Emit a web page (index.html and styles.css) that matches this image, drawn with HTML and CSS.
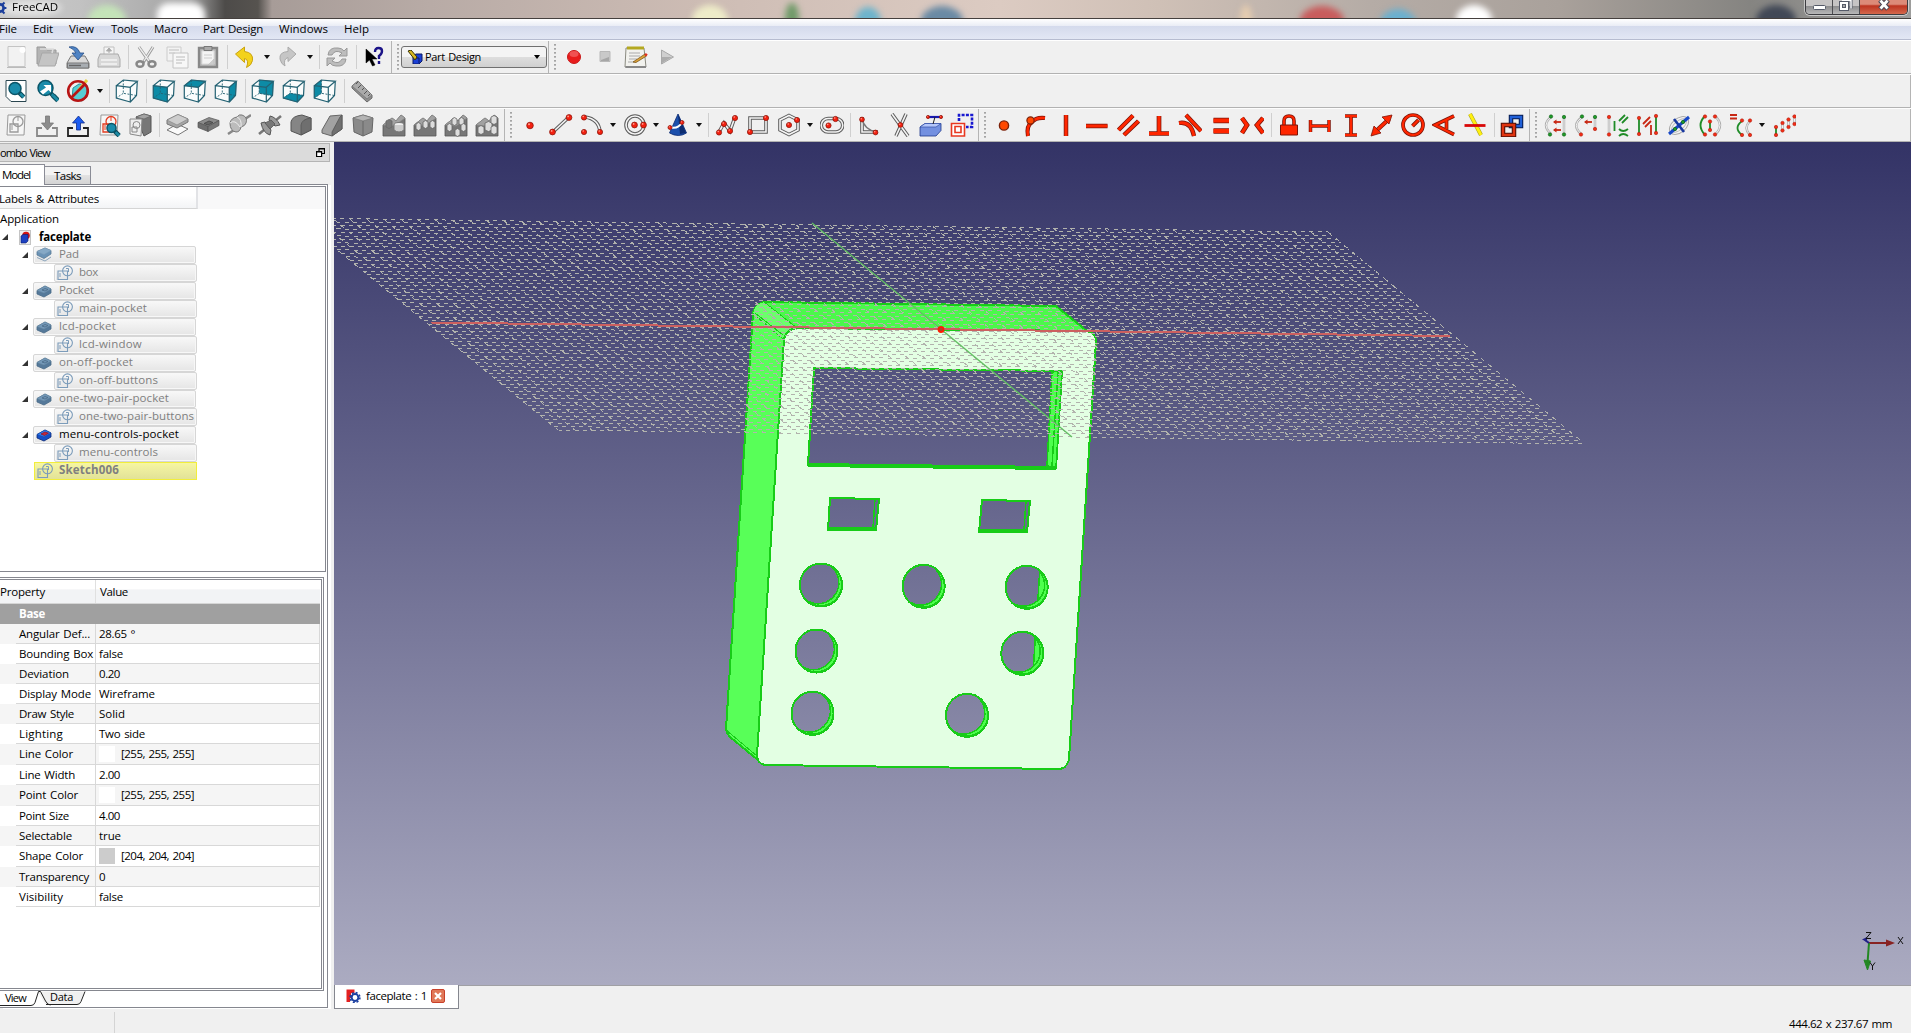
FILE: index.html
```
<!DOCTYPE html>
<html lang="en">
<head>
<meta charset="utf-8">
<title>FreeCAD</title>
<link rel="stylesheet" href="styles.css">
</head>
<body>
<header class="titlebar">
  <div class="glass"><b class="g1"></b><b class="g2"></b><b class="g3"></b><b class="g4"></b><b class="g5"></b><b class="g6"></b><b class="g7"></b><b class="g8"></b><b class="g9"></b><b class="g10"></b><b class="g11"></b><b class="g12"></b></div>
  <svg class="appicon" width="7" height="14" viewBox="0 0 7 14"><circle cx="0" cy="7" r="3.6" fill="none" stroke="#1c3f9c" stroke-width="2.6"/><path d="M4 7h2.4M2.5 3.5l2-2M2.5 10.5l2 2" stroke="#1c3f9c" stroke-width="2"/></svg>
  <span class="apptitle" data-w="46">FreeCAD</span>
  <div class="winbtns">
    <span class="wb"><svg width="27" height="16"><rect x="7.5" y="5.5" width="12" height="4" rx="1" fill="#fff" stroke="#555a68"/></svg></span>
    <span class="wb"><svg width="26" height="16"><path d="M9 .5h9v8" fill="none" stroke="#555a68" stroke-width="3"/><path d="M9 .5h9v8" fill="none" stroke="#fff" stroke-width="1.4"/><rect x="6.5" y="1.500" width="9" height="9" fill="#fff" stroke="#555a68"/><rect x="9.500" y="4.500" width="3" height="3" fill="#aaa" stroke="#555a68"/></svg></span>
    <span class="wb close"><svg width="47" height="16"><path d="M20 0l8 9M28 0l-8 9" stroke="#4d4a58" stroke-width="5"/><path d="M20.500 .5l7 8M27.500 .5l-7 8" stroke="#fff" stroke-width="2.800"/></svg></span>
  </div>
</header>
<nav class="menubar">
  <span class="m1" data-w="18">File</span><span class="m2" data-w="20">Edit</span><span class="m3" data-w="25">View</span><span class="m4" data-w="27">Tools</span><span class="m5" data-w="34">Macro</span><span class="m6" data-w="60">Part Design</span><span class="m7" data-w="49">Windows</span><span class="m8" data-w="25">Help</span>
</nav>
<div class="toolrow r1">
  <div class="group first" data-tools="new open save print | cut copy paste | undo v redo v | refresh | what"></div>
  <div class="group wbgroup"><i class="handle"></i>
    <div class="combo"><svg width="16" height="14" viewBox="0 0 16 14"><path d="M6 6l3-2h6v7l-3 3H6z" fill="#1a3fd6" stroke="#0a1a66"/><path d="M9 8h3v5" fill="none" stroke="#0a1a66"/><path d="M1 1l3-1 6 7-2 3z" fill="#d8b820" stroke="#3a3408"/></svg><span data-w="56">Part Design</span><em></em></div>
  </div>
  <div class="group last" data-handle="1" data-tools="rec stop edit play"></div>
</div>
<div class="toolrow r2"><div class="group last first" data-tools="fit fitsel draw v | iso | cfront ctop cright | cback cbottom cleft | ruler"></div></div>
<div class="toolrow r3">
  <div class="group w504 first" data-tools="sknew leave enter skview map | pad pocket revol groove fillet chamfer draft mirror linear polar multi"></div>
  <div class="group w475" data-handle="1" data-tools="point line arc v circle v cone v | poly rect hex v slot | corner trim extern carbon"></div>
  <div class="group w551" data-handle="1" data-tools="kpoint kobj kvert khor kpar kperp ktan keq ksym | klock khd kvd kdist krad kang ksnell | kref"></div>
  <div class="group last" data-handle="1" data-tools="s1 s2 s3 s4 s5 s6 s7 v s8"></div>
</div>
<main class="work">
  <aside class="dock">
    <div class="docktitle"><span data-w="50">ombo View</span><svg width="9" height="9" viewBox="0 0 9 9"><path d="M3 .5h5.500v5H3zM3 1h5.500" fill="none" stroke="#000" stroke-width="1.200"/><path d="M.6 3.500h5v5h-5z" fill="#fff" stroke="#000" stroke-width="1.200"/><path d="M.5 4h5" stroke="#000"/></svg></div>
    <div class="tabs"><span class="tab on"><span data-w="28">Model</span></span><span class="tab"><span data-w="27">Tasks</span></span></div>
    <div class="pane">
      <section class="tree">
        <div class="treehead"><span data-w="100">Labels &amp; Attributes</span></div>
        <div class="app"><span data-w="59">Application</span></div>
        <div class="row root"><i class="tw"></i><svg width="12" height="15" viewBox="0 0 12 15"><rect x=".5" y=".5" width="11" height="14" fill="#eee" stroke="#c4c4c4"/><circle cx="7" cy="5.500" r="3.800" fill="#d41414"/><path d="M2 6l2-1.500h5V11l-2 2H2z" fill="#1c3fc0" stroke="#0c1f70" stroke-width=".6"/></svg><b data-w="52">faceplate</b></div>
        <div class="row par"><i class="tw"></i><div class="item" data-icon="tpad"><span data-w="20">Pad</span></div></div>
        <div class="row kid"><div class="item" data-icon="tsk"><span data-w="19">box</span></div></div>
        <div class="row par"><i class="tw"></i><div class="item" data-icon="tpk"><span data-w="35">Pocket</span></div></div>
        <div class="row kid"><div class="item" data-icon="tsk"><span data-w="68">main-pocket</span></div></div>
        <div class="row par"><i class="tw"></i><div class="item" data-icon="tpk"><span data-w="57">lcd-pocket</span></div></div>
        <div class="row kid"><div class="item" data-icon="tsk"><span data-w="63">lcd-window</span></div></div>
        <div class="row par"><i class="tw"></i><div class="item" data-icon="tpk"><span data-w="74">on-off-pocket</span></div></div>
        <div class="row kid"><div class="item" data-icon="tsk"><span data-w="79">on-off-buttons</span></div></div>
        <div class="row par"><i class="tw"></i><div class="item" data-icon="tpk"><span data-w="110">one-two-pair-pocket</span></div></div>
        <div class="row kid"><div class="item" data-icon="tsk"><span data-w="115">one-two-pair-buttons</span></div></div>
        <div class="row par"><i class="tw"></i><div class="item live" data-icon="tpkon"><span data-w="120">menu-controls-pocket</span></div></div>
        <div class="row kid"><div class="item" data-icon="tsk"><span data-w="79">menu-controls</span></div></div>
        <div class="row par nochild"><div class="item sel" data-icon="tsk"><b data-w="60">Sketch006</b></div></div>
      </section>
      <section class="props">
        <div class="pinner">
          <div class="phead"><span class="c1"><span data-w="45">Property</span></span><span class="c2"><span data-w="28">Value</span></span></div>
          <div class="pbase"><b data-w="26">Base</b></div>
          <div class="prow"><span class="n"><span data-w="71">Angular Def...</span></span><span class="v"><span data-w="36">28.65 °</span></span></div>
          <div class="prow"><span class="n"><span data-w="74">Bounding Box</span></span><span class="v"><span data-w="24">false</span></span></div>
          <div class="prow"><span class="n"><span data-w="50">Deviation</span></span><span class="v"><span data-w="21">0.20</span></span></div>
          <div class="prow"><span class="n"><span data-w="72">Display Mode</span></span><span class="v"><span data-w="56">Wireframe</span></span></div>
          <div class="prow"><span class="n"><span data-w="55">Draw Style</span></span><span class="v"><span data-w="26">Solid</span></span></div>
          <div class="prow"><span class="n"><span data-w="44">Lighting</span></span><span class="v"><span data-w="46">Two side</span></span></div>
          <div class="prow tall"><span class="n"><span data-w="54">Line Color</span></span><span class="v"><i class="sw"></i><span data-w="73">[255, 255, 255]</span></span></div>
          <div class="prow"><span class="n"><span data-w="56">Line Width</span></span><span class="v"><span data-w="21">2.00</span></span></div>
          <div class="prow tall"><span class="n"><span data-w="59">Point Color</span></span><span class="v"><i class="sw"></i><span data-w="73">[255, 255, 255]</span></span></div>
          <div class="prow"><span class="n"><span data-w="50">Point Size</span></span><span class="v"><span data-w="21">4.00</span></span></div>
          <div class="prow"><span class="n"><span data-w="53">Selectable</span></span><span class="v"><span data-w="22">true</span></span></div>
          <div class="prow tall"><span class="n"><span data-w="64">Shape Color</span></span><span class="v"><i class="sw grey"></i><span data-w="73">[204, 204, 204]</span></span></div>
          <div class="prow"><span class="n"><span data-w="70">Transparency</span></span><span class="v"><span data-w="6">0</span></span></div>
          <div class="prow"><span class="n"><span data-w="44">Visibility</span></span><span class="v"><span data-w="24">false</span></span></div>
        </div>
      </section>
      <div class="btabs">
        <svg width="90" height="16" viewBox="0 0 90 16"><path d="M38 .5l5 9q2 4.500 5 4.500h28q3 0 4-3l4.500-10.500z" fill="#f0f0f0"/><path d="M0 14.500h31q3 0 4-3L38.500.5h2l5 9.500q2 4 5 4M46 13.500h31q3 0 4-3l4-10" fill="none" stroke="#222"/></svg>
        <span class="bt1" data-w="21">View</span><span class="bt2" data-w="23">Data</span>
      </div>
    </div>
  </aside>
  <section class="mdi">
    <div class="view"><svg id="scene" width="1577" height="843" viewBox="334 142 1577 843">
      <g fill="#58ff58" stroke="#18cc18" stroke-width="2" shape-rendering="crispEdges">
        <path fill="#4bf84b" d="M764 302L1056 306L1087 331L797 328L784 339L753 313Q755 304 764 302z"/>
        <path d="M753 313L726 729Q727 734 730 737L758 760L757 757L784 339z"/>
        <path stroke="none" fill="#6bff6b" d="M753 313Q755 304 764 302L797 328Q786 330 784 339z"/>
        <path fill="none" stroke-width="1" d="M764 302L797 328M755 313L783 335M726 730L757 756M1056 306L1087 331"/>
        <path fill="#e3ffe3" fill-rule="evenodd" id="front"/>
      </g>
      <g id="holes" fill="#4dff4d" stroke="#18cc18" stroke-width="1.500" shape-rendering="crispEdges">
        <path d="M1052 372L1062 371L1056 467L1047 466z"/><path d="M1058 372L1052 466" fill="none"/>
        <path d="M808 465L1056 468" stroke-width="4"/>
        <path d="M830 498L879 499L876 530L828 530M875 499L873 528" fill="none"/><path d="M828 528.500L876 529.500" stroke-width="4"/>
        <path d="M982 500L1030 501L1027 532M1026 501L1024 530" fill="none"/><path d="M979 530.500L1027 531.500" stroke-width="4"/>
      </g>
      <g id="grid" stroke="#b2b3ad" stroke-width="1" fill="none" shape-rendering="crispEdges"></g>
      <path d="M431 322.500L1450 336" stroke="#cc6060" stroke-width="2" shape-rendering="crispEdges"/>
      <path d="M812 223L1072 437" stroke="#62c062" stroke-width="1.300"/>
      <circle cx="941" cy="329.500" r="2.600" fill="#b04030" stroke="#ff1c00" stroke-width="1.600"/>
      <g stroke-width="2" fill="none"><path d="M1869 943h18" stroke="#882222"/><path d="M1886 939.500l9 3.500-9 3.500z" fill="#882222"/><path d="M1869 943l-1.500 20" stroke="#228822"/><path d="M1864 960l6.500 1-3 9z" fill="#228822" stroke="#228822" stroke-width="1"/><path d="M1862 939.500l5-2.500v5z" fill="#222288"/><path d="M1865 940l4 3" stroke="#222288"/><g stroke="#111" stroke-width="1"><path d="M1866 932.500h5l-5 6h5M1898 937l5 7M1903 937l-5 7M1870 962.500l2.500 3.500 2.500-3.500M1872.500 966v4"/></g></g>
    </svg></div>
    <div class="docbar"><div class="doctab"><svg width="15" height="14" viewBox="0 0 15 14"><path d="M.5.5h8V4H5v2h2v3H4v4H.5z" fill="#e32020"/><circle cx="9" cy="8.500" r="3.400" fill="#fff" stroke="#1c3fa0" stroke-width="2"/><circle cx="9" cy="8.500" r="4.900" fill="none" stroke="#1c3fa0" stroke-width="1.600" stroke-dasharray="2 1.850"/></svg><span data-w="61">faceplate : 1</span><i class="x"><svg width="14" height="14"><path d="M4 4l6 6M10 4l-6 6" stroke="#fff" stroke-width="2.200"/></svg></i></div></div>
  </section>
</main>
<footer class="status"><i></i><span data-w="103">444.62 x 237.67 mm</span></footer>
<script src="app.js"></script>
</body>
</html>
```
FILE: styles.css
```
* { box-sizing: border-box; }
body { margin: 0; width: 1911px; height: 1033px; overflow: hidden; display: flex; flex-direction: column; background: #f0f0f0; color: #000; font: 11.5px/16px "Open Sans", "Noto Sans", sans-serif; word-spacing: 1px; }
svg { display: block; flex: none; }
[data-w] { white-space: nowrap; display: inline-block; }

.titlebar { position: relative; height: 19px; flex: none; display: flex; align-items: flex-start; overflow: hidden; border-bottom: 1px solid #45403e; background: linear-gradient(90deg, #c9c9c9 0, #c2c2c2 80px, #a4a4a4 190px, #4d4b49 225px, #56534f 258px, #a79c98 272px, #b8aba6 430px, #cdbcb4 700px, #dccbc2 1000px, #cfc0b6 1160px, #b5aca6 1370px, #a9a19b 1560px, #858481 1750px, #9d9d9c 1911px); }
.glass { position: absolute; inset: 0; filter: blur(3px); }
.glass b { position: absolute; border-radius: 50%; height: 30px; top: 5px; width: 38px; }
.glass .g1 { left: 88px; background: #c4e4b8; }
.glass .g2 { left: 157px; width: 48px; background: #fff; border-radius: 12px; top: 3px; }
.glass .g3 { left: 692px; background: #eeecc8; width: 36px; top: 5px; }
.glass .g4 { left: 785px; background: #6f9a68; width: 14px; top: 3px; }
.glass .g5 { left: 855px; background: #6db4cc; width: 26px; top: 7px; }
.glass .g6 { left: 921px; background: #6a8aa4; width: 42px; top: 6px; }
.glass .g7 { left: 1240px; background: #e6cdb0; width: 12px; }
.glass .g8 { left: 1300px; background: #c85c5c; width: 44px; top: 6px; }
.glass .g9 { left: 1380px; background: #6ab0cf; width: 36px; top: 9px; }
.glass .g10 { left: 1456px; background: #fff; width: 36px; top: 5px; }
.glass .g11 { left: 1756px; background: #414856; width: 40px; top: 5px; }
.glass .g12 { left: 0; background: rgba(255,255,255,.5); width: 62px; top: 0; height: 16px; }
.appicon { position: relative; margin-top: 1px; }
.apptitle { position: relative; margin: -1px 0 0 5px; flex: 1; }
.winbtns { position: relative; margin-left: auto; margin-right: 3px; display: flex; height: 15px; border: 1px solid #3c3c40; border-top: 0; border-radius: 0 0 5px 5px; overflow: hidden; box-shadow: 0 0 0 1px rgba(255,255,255,.5); }
.wb { width: 27px; border-right: 1px solid #4c4c50; background: linear-gradient(#c6c4c4 0 40%, #8d8d8f 45%, #b8b8b8); overflow: hidden; }
.wb.close { width: 47px; border: 0; background: linear-gradient(#dc8a78 0 30%, #bd3420 42%, #d4684c); }

.menubar { height: 22px; flex: none; display: flex; align-items: center; padding: 0 0 2px; background: linear-gradient(#fff 0, #e9ecf5 7px, #d4daec 7px, #e2e7f4 20px, #b6bcd0 20px, #b6bcd0 21px, #fff 21px); }
.m2 { margin-left: 16px; } .m3 { margin-left: 16px; } .m4 { margin-left: 17px; } .m5 { margin-left: 16px; } .m6 { margin-left: 15px; } .m7 { margin-left: 16px; } .m8 { margin-left: 16px; }
.menubar .m1 { margin-left: -1px; }

.toolrow { display: flex; flex: none; height: 34px; border-bottom: 1px solid #b2b2b2; }
.toolrow.r1 { height: 33px; }
.toolrow.r2, .toolrow.r3 { border-top: 1px solid #fdfdfd; }
.group { display: flex; align-items: center; border-right: 1px solid #b4b4b4; flex: none; }
.group.first { padding-left: .5px; }
.r1 .first { width: 391.5px; }
.wbgroup { width: 157px; }
.group.last { flex: 1; }
.r1 .last { border-right: 0; }
.w504 { width: 504.5px; } .w475 { width: 474.5px; } .w551 { width: 550.5px; }
.handle { width: 9.5px; height: 27px; flex: none; background: repeating-linear-gradient(#a4a4a4 0 1px, #bcbcbc 1px 2px, transparent 2px 4px) 5px 0/2px 27px no-repeat; }
.tool { width: 31px; flex: none; display: flex; justify-content: center; }
.sep { width: 6px; height: 24px; flex: none; background: linear-gradient(#cfcfcf, #cfcfcf) 3px 0/1px 24px no-repeat; }
.drop { width: 12px; flex: none; display: flex; justify-content: center; }
.drop::after { content: ""; border: 3.5px solid transparent; border-top: 4px solid #111; border-bottom: 0; }
.combo { width: 146px; height: 22px; display: flex; align-items: center; padding: 0 6px 0 5px; border: 1px solid #707070; border-radius: 3px; background: linear-gradient(#f4f4f4 50%, #dedede 50%, #d0d0d0); font-size: 11px; }
.combo span { margin-left: 2px; }
.combo em { margin-left: auto; border: 3.5px solid transparent; border-top: 4px solid #000; border-bottom: 0; }

.work { display: flex; flex: none; height: 867px; }
.dock { width: 334px; flex: none; display: flex; flex-direction: column; padding-top: 1px; }
.docktitle { width: 330px; height: 19px; display: flex; align-items: center; justify-content: space-between; padding-right: 4px; background: #dbdbdb; border: 1px solid #b4b4b4; border-left: 0; font-size: 11px; }
.tabs { display: flex; align-items: flex-end; height: 22px; width: 328px; }
.tab { width: 46px; height: 18px; display: flex; justify-content: center; align-items: center; border: 1px solid #8a8c96; border-left: 0; border-bottom: 0; background: linear-gradient(#f3f3f3 50%, #e2e2e2 50%, #d4d4d4); }
.tab.on { width: 45px; height: 21px; background: #fff; padding-right: 12px; margin-bottom: -1px; position: relative; }
.pane { flex: none; width: 328px; height: 824px; border: 1px solid #85878f; border-left: 0; padding: 1px 1px 0 0; background: #fff; display: flex; flex-direction: column; box-shadow: 3px 1px 0 #fff; }
.tree { height: 386px; border: 1px solid #85878f; border-left: 0; flex: none; overflow: hidden; }
.treehead { height: 22px; width: 198px; display: flex; align-items: center; padding-top: 2px; border-right: 2px solid #e2e3e6; box-shadow: 130px 0 0 #f8f8f9; background: linear-gradient(#fff 40%, #f3f4f6); border-bottom: 1px solid #d5d5d5; }
.treehead span { margin-left: -1px; }
.app { height: 19px; padding-top: 2px; }
.row { height: 18px; display: flex; align-items: center; }
.root { padding-left: 2px; } .root svg { margin: 0 8px 0 11px; }
.par { padding-left: 22px; } .kid { padding-left: 54px; } .nochild { padding-left: 34px; }
.tw { width: 0; height: 0; border: 3.5px solid transparent; border-right-color: #333; border-bottom-color: #333; flex: none; margin-right: 5px; }
.root .tw { margin-right: 0; }
.item { width: 163px; height: 18px; display: flex; align-items: center; color: #808080; border: 1px solid #d6d6d6; border-radius: 2px; background: linear-gradient(#f8f8f8, #e5e5e5); box-shadow: inset 0 0 0 1px #f7f7f7; padding-left: 2px; }
.kid .item { width: 143px; }
.item svg { margin-right: 5px; }
.par:not(.nochild) .item svg { margin-right: 6px; }
.item span, .item b { position: relative; top: -1px; }
.item.live { color: #000; }
.item.sel { border-color: #f2ee3c; background: linear-gradient(#f6f6a2, #e2e298); box-shadow: none; border-radius: 0; }

.props { margin-top: 5px; width: 324px; height: 414px; border: 1px solid #85878f; border-left: 0; padding: 1px 1px 1px 0; background: #fff; flex: none; }
.pinner { height: 410px; border: 1px solid #85878f; border-left: 0; padding-right: 1px; }
.phead { height: 24px; display: flex; background: linear-gradient(#fff 40%, #f2f3f5 42%); border-bottom: 1px solid #d5d5d5; align-items: center; }
.phead .c1 { width: 96px; border-right: 1px solid #e0e0e0; height: 100%; padding-top: 4px; } .phead .c2 { padding-left: 4px; }
.pbase { height: 20px; padding: 2px 0 0 19px; background: #a0a0a0; color: #fff; }
.prow { display: flex; height: 20px; background: #fff; padding-left: 16px; }
.prow:nth-child(odd) { background: #f5f5f5; }
.prow.tall { height: 21px; }
.prow .n, .prow .v { border-right: 1px solid #d8d8d8; border-bottom: 1px solid #d8d8d8; padding-left: 3px; display: flex; align-items: center; }
.prow .n { width: 80px; } .prow .v { flex: 1; }
.sw { width: 16px; height: 16px; background: #fff; margin-right: 6px; } .sw.grey { background: #ccc; }
.btabs { position: relative; height: 16px; font-size: 11px; }
.bt1 { position: absolute; left: 5px; top: -1px; } .bt2 { position: absolute; left: 50px; top: -2px; }

.mdi { flex: 1; display: flex; flex-direction: column; }
.view { height: 843px; background: linear-gradient(#333366, #ababc1); overflow: hidden; }
.docbar { height: 24px; border-top: 1px solid #a0a0a4; display: flex; }
.doctab { width: 125px; margin-top: -1px; height: 24px; background: #fff; border: 1px solid #85878f; border-top: 0; display: flex; align-items: center; padding: 0 0 1px 11px; }
.doctab span { margin: 0 4px 0 5px; }
.x { width: 14px; height: 14px; background: #e07858; border: 1px solid #c8402a; border-radius: 2px; overflow: hidden; }
.x svg { margin: -1px; }
.status { height: 24px; flex: none; display: flex; align-items: center; justify-content: space-between; padding: 5px 19px 0 114px; }
.status i { width: 1px; height: 24px; background: #d4d4d4; }
```
FILE: app.js
```
const ball = (x, y, r = 2.6) => `<circle cx="${x}" cy="${y}" r="${r}" fill="#f42010" stroke="#90180c" stroke-width=".8"/><circle cx="${x - r * .3}" cy="${y - r * .35}" r="${r * .3}" fill="#ffa090"/>`;
const gball = (x, y) => `<circle cx="${x}" cy="${y}" r="1.7" fill="#1f9c28" stroke="#0c5c14" stroke-width=".6"/>`;
const sball = (x, y) => `<circle cx="${x}" cy="${y}" r="1.7" fill="#f42c14" stroke="#b02010" stroke-width=".6"/>`;
const P = (d, stroke, w = 1, fill = "none") => `<path d="${d}" fill="${fill}" stroke="${stroke}" stroke-width="${w}"/>`;
const tube = d => P(d, "#5c5c5c", 3.6) + P(d, "#f4f4f4", 1.6);
const red = (d, w = 2.4) => P(d, "#7c1408", w + 1.5) + P(d, "#ff2600", w);
const A = [[1.3, 6.7], [15.3, 8.3], [15.3, 23], [1.3, 19]], B = [[8.3, 1], [22.3, 2.3], [21.5, 16.5], [8.3, 14.3]];
const poly = p => "M" + p.map(q => q.join(" ")).join("L") + "z";
const cube = f => P("M1.3 6.7L8.3 1L22.3 2.300L21.500 16.500L15.300 23L1.300 19z", "none", 0, "#fafcfc") + (f ? P(poly(f), "#0a6a80", .5, "#0d8ba6") : "") + P(poly(A) + `M1.3 6.7L8.3 1L22.3 2.300L15.300 8.300M22.300 2.300L21.500 16.500L15.300 23`, "#246273", 1.2) + `<path d="M8.300 1V14.300L21.500 16.500M8.300 14.300L1.300 19" fill="none" stroke="#246273" stroke-width=".9" stroke-dasharray="2 1.500"/>`;
const block = (h, t = "#aaa", l = "#6a6a6a", r = "#8a8a8a") => P(`M2 ${12 - h / 2}L13 ${7 - h / 2}L23 ${10 - h / 2}L12 ${16 - h / 2}z`, "#555", .7, t) + P(`M2 ${12 - h / 2}L12 ${16 - h / 2}V${16 + h / 2}L2 ${12 + h / 2}z`, "#555", .7, l) + P(`M12 ${16 - h / 2}L23 ${10 - h / 2}V${10 + h / 2}L12 ${16 + h / 2}z`, "#555", .7, r);
const mini = (x, y, s = 5, c = "#ddd") => `<path d="M${x} ${y}l${s / 2} -1.500l${s / 2} 1.500v${s}l-${s / 2} 1.500l-${s / 2} -1.500z" fill="${c}" stroke="#666" stroke-width=".8"/>`;
const terrain = P("M1 12L10 5L14 8L19 2L23 5V23H1z", "#555", .8, "#777") + P("M1 12L10 5L14 8L19 2L23 5L12 13z", "#8a8a8a", .6, "#a2a2a2");
const sketch = c => P("M4 2h17l-1 20H3z", "#999", 1, "#f6f6f6") + P("M6 11h8v8H6z", c, 1.3) + `<circle cx="14" cy="8.500" r="5" fill="none" stroke="${c}" stroke-width="1.300"/>` + P("M8 12v5M14 4v4", c, 1);
const lens = (x, y, r) => P(`M${x + r * .7} ${y + r * .7}l4.500 4.500`, "#0b4c5c", 4.5) + P(`M${x + r * .7 + 1} ${y + r * .7 + 1}l3.500 3.500`, "#1c8ca6", 2.5) + `<circle cx="${x}" cy="${y}" r="${r}" fill="#1a8cab" stroke="#0b5568" stroke-width="1.500"/>`;

const icons = {
  new: P("M4 1.500h17v20H4z", "#c4c4c4", 1, "#f2f2f2") + P("M3 22.500h19", "#bbb", 1) + '<circle cx="18.500" cy="5" r="3" fill="#fff"/>',
  open: P("M2 2h8l2 3h9v14H2z", "#999", 1, "#b4b4b4") + P("M7 8h17l-4 13H3z", "#a8a8a8", 1, "#c4c4c4") + P("M5 4h13l-1 4", "#ddd", 1.5),
  save: P("M5 11h14l4 7v5H1v-5z", "#777", 1, "#d8d8d8") + P("M1.500 18h21v5h-21z", "#777", 1, "#a8adb2") + P("M3 20.500h12", "#666", 1.5) + P("M3 2q8-2 11 6h4l-6 7-6-7h4q-2-4-7-6z", "#284f88", .8, "#4e83c4"),
  print: P("M7 9V2h10v7", "#c0c0c0", 1, "#f5f5f5") + P("M3 9h18l2 5v8H1v-8z", "#aaa", 1, "#d8d8d8") + P("M4 15h16M4 19h16", "#f4f4f4", 1.5) + P("M12 8V5M9.500 6l2.500-3 2.500 3z", "#aaa", 1, "#aaa"),
  cut: P("M5 2l11 16M19 2L9 18", "#999", 3) + P("M5 2l10 14M19 2L10 16", "#eee", 1.3) + '<g fill="none" stroke="#888" stroke-width="2.500"><ellipse cx="6" cy="19" rx="3.500" ry="2.800"/><ellipse cx="18" cy="19" rx="3.500" ry="2.800"/></g>',
  copy: P("M2 2h14v14H2z", "#ccc", 1, "#f3f3f3") + P("M8 8h15v15H8z", "#c4c4c4", 1, "#f7f7f7") + P("M4 5h10M4 8h6M11 12h9M11 15h9M11 18h6", "#d0d0d0", 1.6),
  paste: P("M3 3h18v19H3z", "#888", 2.4, "#bbb") + P("M6 6h12v13H6z", "#ddd", 1, "#f4f4f4") + P("M8 1.500h8v4H8z", "#777", 1, "#aaa") + P("M8 10h8M8 13h8", "#ccc", 1) + P("M12 20l6-6v6z", "#bbb", .5, "#ccc"),
  undo: P("M2.500 9l9-7v4.500q9 1 8 9-1 5-6 7 3-8-2-9v4z", "#c9a310", 1, "#f3d21c"),
  redo: P("M20 9l-8-7v4.500Q3 7 4 14q1 5 5 7-2-7 3-8.500v4z", "#aaa", 1, "#c6c6c6"),
  refresh: P("M3 10q1-8 10-7 4 0 6 3l3-3v8h-8l3-3q-7-4-10 2z", "#999", 1, "#bdbdbd") + P("M21 14q-1 8-10 7-4 0-6-3l-3 3v-8h8l-3 3q7 4 10-2z", "#999", 1, "#bdbdbd"),
  what: P("M4 4v14l3.500-3 3 6 2.500-1-3-6h5z", "#000", .5, "#000") + P("M13 7q0-4 3.500-4T20 6q0 3-3 5v3M17 16v3", "#1c1488", 2.4),
  rec: '<circle cx="12" cy="12" r="6.500" fill="#e81c1c" stroke="#c81818"/><ellipse cx="12" cy="9" rx="4.500" ry="3" fill="#f46a6a" opacity=".7"/>',
  stop: P("M7 6.500h10v10H7z", "#b8b8b8", 1, "#c9c9c9") + P("M8 15l8-3v4H8z", "none", 0, "#a6a6a6"),
  edit: P("M2 3h18l2 19H1z", "#8a8a80", 1, "#f2f2ee") + P("M1.500 22h20.500", "#888", 2) + P("M3 3h17", "#b4a820", 3) + P("M5 8h11M5 11h11M5 14h8M4 17h8", "#aaa", 1) + P("M9 17l12-8 1.500 2L12 17.500z", "#70480c", .7, "#dca43a") + P("M21 9l2 1.500", "#e03020", 2.400),
  play: P("M6.500 5l12 7-12 7z", "#a8a8a8", 1, "#cfcfcf") + P("M7 18l10-6H7z", "none", 0, "#acacac"),
  fit: P("M2 1.500h20v21H7l-5-5z", "#2a4650", 1, "#fff") + lens(11, 9.500, 6),
  fitsel: lens(10.500, 9, 7.500) + P("M18 16.500l5 5", "#0b4c5c", 5) + P("M18 16.500l5 5", "#1c8ca6", 3) + P("M5 12.500l6-4-2.500-2.500H16v7.500l-2.500-2.500L8 15.500z", "none", 0, "#fff"),
  draw: P("M7 9l6-4 8 1v12l-5 4-10-2z", "#27919c", 1, "#58cdd4") + P("M12 12L21 1", "#e8d040", 3) + '<circle cx="12" cy="12" r="9.800" fill="none" stroke="#b81414" stroke-width="2.600"/>' + P("M5 19L18.500 5.500", "#b81414", 2.600),
  iso: cube(), cfront: cube(A), ctop: cube([A[0], A[1], B[1], B[0]]), cright: cube([A[1], B[1], B[2], A[2]]), cback: cube(B), cbottom: cube([A[3], A[2], B[2], B[3]]), cleft: cube([A[0], B[0], B[3], A[3]]),
  ruler: P("M2 7l6-5 14 14v3l-5 4L2 9z", "#6a6a6a", 1, "#8f8f8f") + P("M2 7l6-5 14 14-5 4z", "#777", .8, "#aaa") + P("M8 3l-2 2M11 6l-3 3M14 9l-2 2M17 12l-3 3M20 15l-2 2", "#555", 1),
  sknew: sketch("#9a9a9a"), leave: P("M7 15H2v8h20v-8h-5", "#888", 1.8) + P("M10.500 3h4v7h4L12.500 17l-6-7h4z", "#777", .8, "#8c8c8c"),
  enter: P("M7 15H2v8h20v-8h-5", "#222", 1.8) + P("M10.500 17h4v-7h4L12.500 3l-6 7h4z", "#102c88", .8, "#1c5cf0"),
  skview: sketch("#e43c20") + lens(14.500, 15, 4.500), map: P("M8 4l8-3 7 2v16l-7 4z", "#555", 1, "#777") + P("M8 4l8-3 7 2-7 3z", "#666", .7, "#a4a4a4") + P("M2 6h12l-1 17-11-2z", "#888", 1, "#eee") + '<circle cx="8.500" cy="12" r="3.500" fill="none" stroke="#888"/>' + P("M4 14h5v5H4z", "#888", 1),
  pad: P("M2 17l11 5 10-6-11-5z", "#777", 1, "#fafafa") + P("M2 7L13 1.500 23 6v3l-11 6L2 11z", "#777", 1, "#a5a5a5") + P("M2 7L13 1.500 23 6l-11 6z", "#888", .7, "#cdcdcd"),
  pocket: block(5, "#8c8c8c", "#6e6e6e", "#777") + P("M8 10.500l5-2.500 4 1.500-5 2.500z", "#444", .8, "#666"),
  revol: P("M18 6l6-4M1 21l6-4", "#888", 2.500) + P("M3 10q1-5 7-6 2-3 5-2 6 2 4 8-1 3-5 4-1 5-5 5-6-1-6-9z", "#777", 1, "#bcbcbc") + P("M3 10q5-4 10 4M10 4q5 2 4 10", "#eee", 1),
  groove: P("M1 21L23 3", "#777", 2.500) + P("M3 10l4-1 6 8-1 5q-7-2-9-12zM12 3q6 1 10 9l-5 1-6-6z", "#555", 1, "#999") + P("M7 10l6-3 4 4-5 5z", "#555", .8, "#777"),
  fillet: P("M2 9q1-6 11-7l9 3v12l-10 5-10-4z", "#555", 1, "#858585") + P("M12 22V12q1-6 10-7v12z", "#555", .8, "#6f6f6f"),
  chamfer: P("M2 17L10 3l12-1v14l-10 7-10-3z", "#666", 1, "#a2a2a2") + P("M12 23V19L20 4l2-2v14z", "#555", .8, "#707070"),
  draft: P("M2 5l10-3 10 3-1 14-9 4-9-4z", "#666", 1, "#8a8a8a") + P("M2 5l10 3 10-3-10-3z", "#777", .7, "#b4b4b4") + P("M12 8v15", "#666", 1),
  mirror: terrain + mini(4, 8, 6, "#777") + '<ellipse cx="17" cy="12" rx="5" ry="2.500" fill="#eee" stroke="#777"/><path d="M12 12v5q5 4 10 0v-5" fill="#ccc" stroke="#777"/>',
  linear: terrain + mini(3, 11) + mini(10, 9) + mini(17, 9), polar: terrain + mini(3, 12) + mini(8, 6) + mini(15, 6) + mini(17, 12) + mini(11, 17), multi: terrain + mini(3, 14, 6) + mini(10, 10, 7) + mini(16, 4, 6) + mini(16, 14, 6),
  point: ball(12, 12.500, 3.300), line: tube("M4 19L20 4") + ball(3.500, 19, 2.900) + ball(20, 4.500, 2.900), arc: tube("M5 4q14 2 15 15") + ball(4, 4.500) + ball(4, 19) + ball(20, 19),
  circle: '<circle cx="12" cy="12" r="9" fill="none" stroke="#5c5c5c" stroke-width="3.600"/><circle cx="12" cy="12" r="9" fill="none" stroke="#f4f4f4" stroke-width="1.600"/>' + ball(11.500, 12, 2.900) + ball(20.500, 12, 2.900),
  cone: P("M12 1L20.500 20q-8 5-17 0z", "#0a2870", .8, "#1c50ac") + P("M12 1l2 20 6-1z", "none", 0, "#0c2c70") + P("M3.500 14q8 3 13-5", "#fff", 2) + ball(4, 14.500, 2) + ball(16, 9.500, 2),
  poly: tube("M4 19L9 10L15 18L20 4") + ball(4, 19.500) + ball(9, 11) + ball(15, 18) + ball(20, 5), rect: tube("M4 5H20V19H4z") + ball(20, 5) + ball(4, 19),
  hex: tube("M12 2.500L21 7V17L12 21.500L3 17V7z") + ball(12, 12) + ball(20, 7), slot: tube("M8 5.500H16a6.500 6.500 0 0 1 0 13.500H8a6.500 6.500 0 0 1 0 -13.500z") + ball(8.500, 12.500) + ball(15.500, 6),
  corner: tube("M5 4V19H21") + P("M5 5q2 12 15 14", "#777", 1.500) + ball(5, 6.500, 2.400) + ball(18.500, 19.500, 2.400), trim: tube("M4 1L20 23M18 1L8 23") + ball(12.500, 12, 2.400),
  extern: P("M1 14l5-3.500h16v7l-5 5.500H1z", "#20388c", .8, "#7390e0") + P("M1 14l5-3.500h16l-5 3.500z", "#3450a8", .7, "#b4c6fa") + P("M9 4h14", "#1818b0", 2.200) + P("M16 4l-2 7", "#222", 1, "none") + ball(9, 4, 1.600) + ball(22, 4, 1.600),
  carbon: '<path d="M9 8V2h13v12h-6" fill="none" stroke="#1818d0" stroke-width="2.600" stroke-dasharray="3 1.300"/>' + P("M1.500 10.500h13v12.500h-13z", "#e83820", 1.600, "#fff") + P("M5 13.500h6v6H5z", "#e83820", 1.600),
  kpoint: '<circle cx="12" cy="12.500" r="4.600" fill="#ff4800" stroke="#7c2008" stroke-width="1.400"/>', kobj: red("M5 23q-2-10 4-14Q13 4 22 5", 2.600) + '<circle cx="7.500" cy="7.500" r="3.600" fill="#ff4800" stroke="#7c2008" stroke-width="1.200"/>',
  kvert: red("M12 2v21", 3), khor: red("M1 13h21.500", 3), kpar: red("M2.500 17L17 2.500M8 22L22.500 8", 3), kperp: red("M12 3v17M2 20.500h20", 3.200), ktan: red("M1 10q12-2 15 13M8 2l15 16", 2.800), keq: red("M4.500 7.500h15.500M4.500 18h15.500", 4.200), ksym: red("M2 5l5 7-5 8M23 5l-6 7 6 8", 3.200),
  klock: P("M7 12V8q0-5 5-5t5 5v4", "#7c1408", 3.600) + P("M7 12V8q0-5 5-5t5 5v4", "#ff2600", 2) + P("M3.500 12h17v10h-17z", "#7c1408", 1, "#ff2600"), khd: red("M2.500 7v12M21 7v12M3 13h18", 2), kvd: red("M6 3h12M6 22h12M12 3v19", 2.200),
  kdist: red("M5 19L19 6", 2.800) + P("M1 23l3-10 7 7zM22 2l-3 9-7-7z", "#7c1408", .8, "#ff2600"), krad: '<circle cx="12" cy="12" r="10" fill="none" stroke="#7c1408" stroke-width="3.700"/><circle cx="12" cy="12" r="10" fill="none" stroke="#ff2600" stroke-width="2.200"/>' + red("M11.500 13l6-6", 2.400),
  kang: red("M22 3L3 12l19 9.500M14.500 7v9", 2.200), ksnell: P("M7 1l11 21", "#aaa420", 4) + P("M7 1l11 21", "#fff010", 2.800) + P("M1.500 12.500h21", "#d80808", 2.800),
  kref: P("M11 4h10v9H11z", "#081c50", 4.500) + P("M11 4h10v9H11z", "#2060d8", 2.400) + P("M3 12h11v10H3z", "#501008", 4.500) + P("M3 12h11v10H3z", "#e03410", 2.400)
};
const gray = d => P(d, "#aaa", 2.4) + P(d, "#f2f2f2", 1), grn = d => P(d, "#1f8c28", 1.8), sr = d => P(d, "#c82814", 1.800);
const arrow = (x, y) => sr(`M${x} ${y}h7`) + P(`M${x - 1} ${y}l3.500-2.500v5z`, "none", 0, "#c82814");
Object.assign(icons, {
  s1: gray("M8 4Q-2 12 8 21M21 4V21") + gball(8, 3.500) + gball(21, 4) + gball(7, 21.500) + gball(21, 21.500) + arrow(11, 9) + arrow(11, 17),
  s2: gray("M8 4Q-3 12 7 21M21 4V16") + gball(8, 3.500) + gball(21, 4) + sball(7, 21.500) + sball(21, 16) + arrow(11, 9),
  s3: gray("M4 4V21") + sball(4, 4) + sball(4, 21.500) + grn("M9.500 8v10M14 8l6-6M17 10l6-6M14 16q4 4 9 0M14 23q4-4 9 0"),
  s4: grn("M3 4V21M20 3V20") + sball(3, 5) + sball(3, 21) + sball(20, 3) + sball(20, 20) + sr("M7 11l7-7M9 14l6-6M15 12v10"),
  s5: '<ellipse cx="12" cy="12.500" rx="11" ry="7" transform="rotate(-40 12 12.500)" fill="#f4f4f4" stroke="#aaa"/><ellipse cx="12" cy="12.500" rx="9" ry="4.500" transform="rotate(-40 12 12.500)" fill="none" stroke="#bbb"/>' + P("M2 21L22 4", "#1848c8", 3) + P("M7 6l10 13", "#1838a0", 2.600) + gball(8, 16) + gball(16, 9),
  s6: grn("M7 3Q-2 12 7 22") + gray("M17 3Q27 12 17 22") + grn("M12 8v9") + [[7, 3.500], [17, 3.500], [12, 8.500], [12, 17], [7, 21.500], [17, 21.500]].map(p => sball(...p)).join(""),
  s7: sr("M1 2h7M1 5.500h7") + grn("M13 8Q4 15 13 22") + gray("M21 8Q14 15 21 22") + sball(13, 7.500) + sball(21, 7.500) + sball(13, 22) + sball(21, 22),
  s8: grn("M4 14V22") + gray("M10.500 10V18M16.500 6V14M22.500 3V11") + [[4, 14], [4, 22], [10.500, 10], [10.500, 17.500], [16.500, 6.500], [16.500, 14], [22.500, 3.500], [22.500, 11]].map(p => sball(...p)).join("")
});
const treeIcons = {
  tpad: P("M1 10.500l8 3.500 6-4", "#8ba4bb", 1, "none") + P("M1 4.500L9 1l6 2.500V7l-7 4.500L1 8z", "#587894", .8, "#6b93b6") + P("M1 4.500L9 1l6 2.500-7 4z", "#7c9cb8", .5, "#86a9c6"),
  tpk: P("M1 7.500L9 3l6 3v4l-7 4-7-3z", "#486a86", .8, "#55799a") + P("M1 7.500L9 3l6 3-7 4z", "#6888a0", .5, "#7398b8") + P("M6 7l3-1.500 3 1-3 1.500z", "#4a6a86", .8),
  tpkon: P("M1 7.500L9 3l6 3v4l-7 4-7-3z", "#0c2874", .8, "#1450c8") + P("M1 7.500L9 3l6 3-7 4z", "#1440a0", .5, "#2c80f0") + P("M5 7l4-2 3.500 1.200L8.500 8.500z", "#8c1830", .8, "#c82838"),
  tsk: '<circle cx="10.500" cy="5.800" r="4.900" fill="none" stroke="#7c9cba" stroke-width="1.100"/>' + P("M1 6h9.500v8.500H1z", "#7c9cba", 1.1) + P("M3 8v4M9 3.500h2.500V7", "#7c9cba", 1)
};

document.querySelectorAll("[data-tools]").forEach(bar => {
  let html = bar.dataset.handle ? '<i class="handle"></i>' : "";
  for (const t of bar.dataset.tools.split(" ")) {
    if (t === "|") html += '<i class="sep"></i>';
    else if (t === "v") html += '<i class="drop"></i>';
    else html += `<span class="tool"><svg width="24" height="24" viewBox="0 0 24 24">${icons[t]}</svg></span>`;
  }
  bar.insertAdjacentHTML("beforeend", html);
});
document.querySelectorAll("[data-icon]").forEach(el => el.insertAdjacentHTML("afterbegin", `<svg width="17" height="16" viewBox="0 0 17 16">${treeIcons[el.dataset.icon]}</svg>`));

/* Track each label so that it fills its nominal width. */
document.querySelectorAll("[data-w]").forEach(el => {
  const range = document.createRange();
  range.selectNodeContents(el);
  const w = range.getBoundingClientRect().width;
  el.style.letterSpacing = ((el.dataset.w - w) / el.textContent.length).toFixed(3) + "px";
});

/* Front face with its openings. */
const circles = [[821, 585], [923.7, 586.3], [1026.7, 587.3, 1], [816.5, 651], [1022.3, 653.3, 1], [812.5, 713.3], [967, 715.3]];
const R = 21;
let face = "M797 328L1087 331Q1096 333 1096 342L1069 759Q1067 769 1058 769L766 765Q757 764 757 755L784 339Q786 329 797 328zM814 368L1062 371L1056 468L808 465zM830 498L879 499L876 530L828 530zM982 500L1030 501L1027 532L979 532z";
let crescents = "";
for (const [x, y, wall] of circles) {
  face += `M${x - R} ${y}a${R} ${R + .5} 0 1 1 ${2 * R} 0a${R} ${R + .5} 0 1 1 ${-2 * R} 0z`;
  if (wall) crescents += `<path d="M${x + 13} ${y - 16}L${x + 11} ${y + 16}Q${x + 29} ${y} ${x + 13} ${y - 16}z"/>`;
  crescents += `<path d="M${x + 10.5} ${y - 18.2}A21 21 0 1 1 ${x - 13.9} ${y + 15.8}A21 21 0 0 0 ${x + 10.5} ${y - 18.2}z"/>`;
}
document.getElementById("front").setAttribute("d", face);
document.getElementById("holes").insertAdjacentHTML("beforeend", crescents);

/* Sketch grid, a sheared 60 by 60 plane. */
const TL = [298, 218], TR = [1328, 232], BR = [1585, 444], BL = [558, 430], N = 60;
const mix = (a, b, t) => [a[0] + (b[0] - a[0]) * t, a[1] + (b[1] - a[1]) * t];
let hor = "", dia = "";
for (let i = 0; i <= N; i++) {
  hor += `M${mix(TL, BL, i / N)}L${mix(TR, BR, i / N)}`;
  dia += `M${mix(TL, TR, i / N)}L${mix(BL, BR, i / N)}`;
}
document.getElementById("grid").innerHTML = `<path d="${hor}" stroke-dasharray="4 4.500"/><path d="${dia}" stroke-dasharray="4.200 6.200"/>`;
```
